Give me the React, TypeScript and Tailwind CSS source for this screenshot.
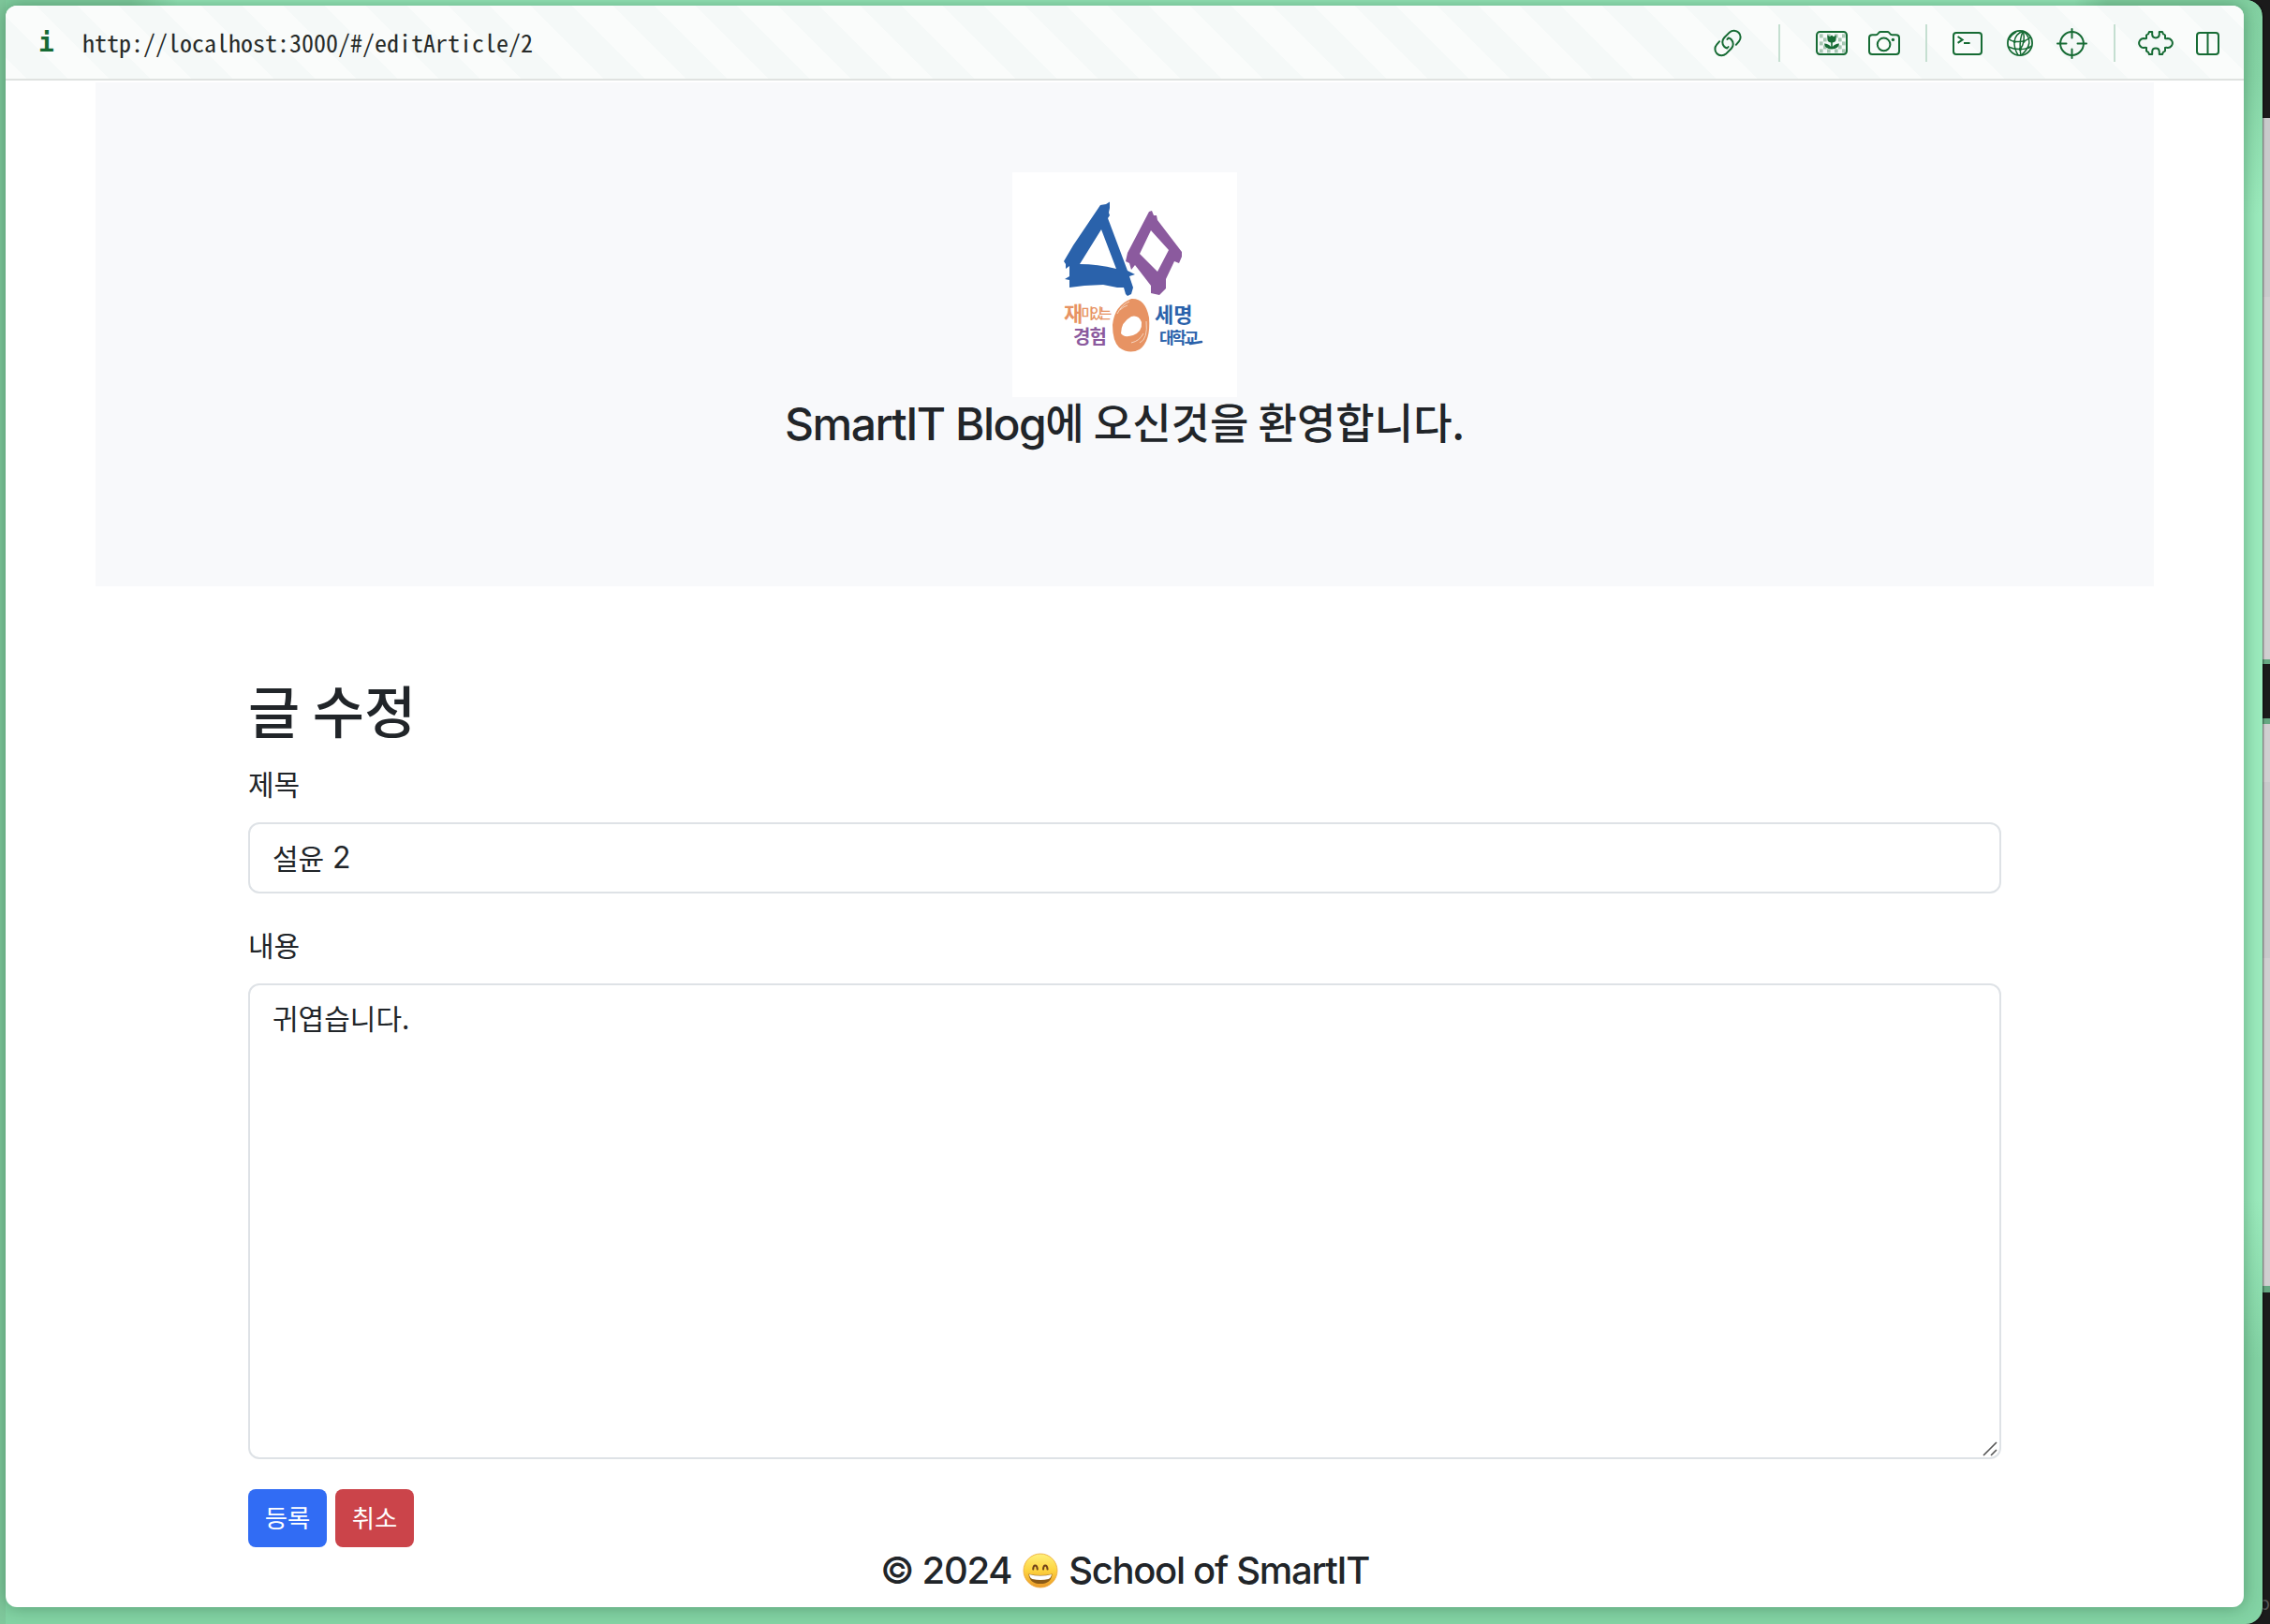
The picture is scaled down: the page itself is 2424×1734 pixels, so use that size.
import React from "react";

const INK = "#166b34";

function Ko({ children, className = "" }: { children: React.ReactNode; className?: string }) {
  return <span className={`font-['Noto_Sans_CJK_KR',sans-serif] ${className}`}>{children}</span>;
}

function Divider({ className = "" }: { className?: string }) {
  return <div className={`h-10 w-[2px] shrink-0 bg-[#c5dfd1] ${className}`} />;
}

function LinkIcon() {
  return (
    <svg className="ml-[30px]" width="30" height="30" viewBox="0 0 30 30" fill="none" stroke={INK} strokeWidth="2" strokeLinecap="round">
      <path d="M6.2 13.2 L3.2 16.6 A7 7 0 0 0 3.4 26.2 A7 7 0 0 0 13 26.6 L18.8 20.8 A7 7 0 0 0 18.8 11.2 Q17.6 10 15.8 9.6 Q15 10.2 14.4 11" />
      <path d="M23.8 16.8 L26.8 13.4 A7 7 0 0 0 26.6 3.8 A7 7 0 0 0 17 3.4 L11.2 9.2 A7 7 0 0 0 11.2 18.8 Q12.4 20 14.2 20.4 Q15 19.8 15.6 19" />
    </svg>
  );
}

function ImageIcon() {
  const cells: [number, number][] = [
    [4, 4], [12, 4], [20, 4], [8, 8], [24, 8], [4, 12], [28, 12], [8, 16], [24, 16], [4, 20], [12, 20], [20, 20], [28, 4], [28, 20],
  ];
  return (
    <svg className="ml-[38px]" width="34" height="26" viewBox="0 0 34 26" fill="none">
      {cells.map(([x, y]) => (
        <rect key={`${x}-${y}`} x={x} y={y - 0.6} width="3.6" height="4" fill={INK} opacity=".35" />
      ))}
      <rect x="1" y="1" width="32" height="24" rx="3.4" stroke={INK} strokeWidth="2" />
      <path d="M12.4 4.5 L15 6.3 L17 4.6 L19 6.3 L21.6 4.5 V9 Q21.6 12.4 17 12.4 Q12.4 12.4 12.4 9 Z" fill={INK} />
      <path d="M16.2 12 H17.8 V17 Q20.4 13.6 25 13.4 Q24.6 19 17 19.6 Q9.4 19 9 13.4 Q13.6 13.6 16.2 17 Z" fill={INK} />
    </svg>
  );
}

function CameraIcon() {
  return (
    <svg className="ml-[22px]" width="34" height="26" viewBox="0 0 34 26" fill="none" stroke={INK} strokeWidth="2">
      <path d="M4.4 4.2 H8.2 Q9.6 4.2 10.4 3 L11.2 2 Q12 1 13.2 1 H20.4 Q21.6 1 22.4 2 L23.2 3 Q24 4.2 25.4 4.2 H29.6 Q33 4.2 33 7.4 V21.8 Q33 25 29.6 25 H4.4 Q1 25 1 21.8 V7.4 Q1 4.2 4.4 4.2 Z" />
      <circle cx="16.6" cy="14.4" r="6.8" />
      <circle cx="26.4" cy="9.4" r="1.7" fill={INK} stroke="none" />
    </svg>
  );
}

function TerminalIcon() {
  return (
    <svg className="ml-[27px]" width="32" height="25" viewBox="0 0 32 25" fill="none" stroke={INK} strokeWidth="2">
      <rect x="1" y="1" width="30" height="23" rx="3" />
      <path d="M5.6 5 L10.6 8.4 L5.6 11.8" />
      <path d="M12 12 H18.6" />
    </svg>
  );
}

function GlobeIcon() {
  return (
    <svg className="ml-[26px]" width="28" height="28" viewBox="0 0 28 28" fill="none" stroke={INK} strokeWidth="1.5">
      <circle cx="14" cy="14" r="13.1" strokeWidth="1.8" />
      <path d="M17.4 1.2 Q9 4 8 12.4 Q7.6 20 12 26.8" />
      <path d="M17.4 1.2 Q13.6 9 14.2 20.6 Q14.4 24 15 27" />
      <path d="M17.4 1.2 Q18.8 7 18 12.2 Q17.2 17 14.2 20.6" />
      <path d="M17.4 1.2 Q24.6 7 23.8 14 Q22.6 21 15.2 27" />
      <path d="M2 9.4 Q5 12.6 13 12.6 Q21 12.4 25.4 7.6" />
      <path d="M1.6 18 Q7 20.6 14.2 20.6 Q22 20.6 26.4 17" />
      <path d="M10 2 Q5 5 2.6 9" />
      <circle cx="8.2" cy="12.4" r="1.5" fill={INK} stroke="none" />
      <circle cx="18" cy="12.2" r="1.5" fill={INK} stroke="none" />
      <circle cx="14.3" cy="20.5" r="1.7" fill={INK} stroke="none" />
      <circle cx="23.4" cy="18.8" r="1.2" fill={INK} stroke="none" />
    </svg>
  );
}

function TargetIcon() {
  return (
    <svg className="ml-[25px]" width="33" height="33" viewBox="0 0 33 33" fill="none" stroke={INK} strokeWidth="2" strokeLinecap="round">
      <circle cx="16.5" cy="16.5" r="12.4" />
      <path d="M16.5 1 V10.5 M16.5 22.5 V32 M1 16.5 H10.5 M22.5 16.5 H32" />
    </svg>
  );
}

function PuzzleIcon() {
  return (
    <svg className="ml-[24px]" width="38" height="26" viewBox="0 0 38 26" fill="none" stroke={INK} strokeWidth="2" strokeLinejoin="round">
      <path d="M9 8 V4.6 Q9.6 3.8 11 3.4 L12 1 H15.2 V4 Q15.4 7.4 19 7.4 Q22.6 7.4 22.8 4 V1 H26 L27 3.4 Q28.6 3.8 29 4.6 V8 Q30.2 8.6 31.6 8 Q34 7.8 35.8 10 Q38 13 35.8 16 Q34 18.2 31.6 18 Q30.2 17.4 29 18 V21.4 Q28.6 22.2 27 22.6 L26 25 H22.8 V22 Q22.6 18.6 19 18.6 Q15.4 18.6 15.2 22 V25 H12 L11 22.6 Q9.6 22.2 9 21.4 V18 Q7.8 17.4 6.4 18 Q4 18.2 2.2 16 Q0 13 2.2 10 Q4 7.8 6.4 8 Q7.8 8.6 9 8 Z" />
    </svg>
  );
}

function SplitIcon() {
  return (
    <svg className="ml-[24px]" width="25" height="25" viewBox="0 0 25 25" fill="none" stroke={INK} strokeWidth="2">
      <rect x="1" y="1" width="23" height="23" rx="3" />
      <path d="M12.5 1 V24" />
    </svg>
  );
}

function Toolbar() {
  return (
    <header className="flex h-20 shrink-0 items-center border-b-2 border-[#dfe2e0] bg-[repeating-linear-gradient(45deg,#fafcfb_0px,#fafcfb_15.6px,#f5f9f8_15.6px,#f5f9f8_46.7px,#fafcfb_46.7px,#fafcfb_62.23px)]">
      <span className="mt-[1px] ml-[35px] w-[18px] font-['DejaVu_Sans_Mono',monospace] text-[28px] leading-none font-bold text-[#166b34]">i</span>
      <span className="ml-[29px] font-['Noto_Sans_Mono_CJK_KR','Liberation_Mono',monospace] text-[26px] leading-none font-medium whitespace-nowrap text-[#262a28]">
        http://localhost:3000/#/editArticle/2
      </span>
      <div className="mr-[26px] ml-auto flex items-center pt-[2px]">
        <LinkIcon />
        <Divider className="ml-[39px]" />
        <ImageIcon />
        <CameraIcon />
        <Divider className="ml-[27px]" />
        <TerminalIcon />
        <GlobeIcon />
        <TargetIcon />
        <Divider className="ml-[28px]" />
        <PuzzleIcon />
        <SplitIcon />
      </div>
    </header>
  );
}

function Logo() {
  return (
    <svg className="block bg-white" width="240" height="240" viewBox="1 4 240 240">
      <path
        fill="#2a62ab"
        fillRule="evenodd"
        d="M95 39 L101 38 L105 35.5 L105 42 L104 47 L105 50 L103 53 L124 109 L132 113 L126 115 L130 127 L128 134 L124 136 L122 134 L120 127 L113 127 L98 124 L78 125 L62 127 L62 119 L57 118 L62 115 L62 104 L58 107 L58 102 L56 99 L66 82 Z M96 65 L73 102 Q92 102 112 107 Z"
      />
      <path
        fill="#8b5a9e"
        fillRule="evenodd"
        d="M147 46 L150 45 L152 50 L155 50 L156 55 L182 89 L182 94 L179 101 L174 99 L165 118 L165 128 L158 135 L149 133 L149 125 L132 103 L128 108 L126 101 L122 99 L124 90 Z M149 66 L137 91 L156 110 L168 87 Z"
      />
      <path
        fill="#e79363"
        fillRule="evenodd"
        d="M128 139 Q143 138 147 159 Q149 184 137 193 Q126 199 115 191 Q108 184 108 167 Q110 146 128 139 Z M128 158 Q117 164 117 176 Q120 181 130 178 Q140 174 139 164 Q136 156 128 158 Z"
      />
      <path d="M113 155 Q118 145 126 142 M116 151 Q120 147 124 146 M144 163 Q146 182 137 186 M141 176 Q137 184 128 186" stroke="#f6d3bd" strokeWidth="1" fill="none" />
      <g fontFamily="'Noto Sans CJK KR', sans-serif" fontWeight="500">
        <text x="56" y="163" fontSize="15" fill="#e79363">
          <tspan fontSize="22" fontWeight="700">재</tspan>
          <tspan dx="-2" dy="-3" letterSpacing="-4.2">미있는</tspan>
        </text>
        <text x="66" y="187" fontSize="20" fill="#8b5a9e" fontWeight="700" letterSpacing="-1">경험</text>
        <text x="153" y="164" fontSize="22" fill="#2a62ab" fontWeight="700" letterSpacing="0">세명</text>
        <text x="158" y="187" fontSize="17" fill="#2a62ab" fontWeight="700" letterSpacing="-2.4">대학교</text>
      </g>
      <path d="M191 187 L203 185" stroke="#2a62ab" strokeWidth="2.5" strokeLinecap="round" />
    </svg>
  );
}

function Hero() {
  return (
    <section className="mx-24 mt-[2px] flex h-[538px] shrink-0 flex-col items-center bg-[#f8f9fb] pt-24">
      <Logo />
      <h1 className="flex h-[58px] items-center font-medium whitespace-nowrap">
        <span className="text-[48px] tracking-[-1.5px]">SmartIT Blog</span>
        <Ko className="-mt-[6px] text-[45px]">에 오신것을 환영합니다.</Ko>
      </h1>
    </section>
  );
}

function Grin() {
  return (
    <svg width="38" height="38" viewBox="0 0 38 38">
      <defs>
        <linearGradient id="face" x1="0" y1="0" x2="0" y2="1">
          <stop offset="0" stopColor="#fff07a" />
          <stop offset=".5" stopColor="#fdd33f" />
          <stop offset="1" stopColor="#eb9a2b" />
        </linearGradient>
      </defs>
      <circle cx="19" cy="19" r="18" fill="url(#face)" stroke="#eba73a" strokeWidth=".8" />
      <path d="M11.2 17.6 Q11.4 13.4 13.4 13.4 Q15.4 13.4 15.8 17.6 M22 17.6 Q22.2 13.4 24.2 13.4 Q26.2 13.4 26.6 17.6" stroke="#71431a" strokeWidth="2" fill="none" strokeLinecap="round" />
      <path d="M6.4 22.4 Q19 25.4 31.6 22.4 Q30.6 33 19 33 Q7.4 33 6.4 22.4 Z" fill="#8a5a17" />
      <path d="M7 23 Q19 26 31 23 Q30.4 27 27.6 28 Q19 30 10.4 28 Q7.6 27 7 23 Z" fill="#fff" />
    </svg>
  );
}

function Form() {
  return (
    <main className="mx-[259px] mt-[92px] flex flex-col">
      <h2 className="h-[77px] leading-[77px] font-medium">
        <Ko className="text-[60px]">글 수정</Ko>
      </h2>
      <label className="mt-[17px] h-12 text-[30px] leading-[48px]">
        <Ko>제목</Ko>
      </label>
      <div className="mt-[18px] flex h-[76px] items-center rounded-xl border-2 border-[#dee2e6] px-6 text-[32px] leading-none whitespace-pre">
        <Ko className="mr-[2px] -mt-[3px] text-[30px]">설윤 </Ko>2
      </div>
      <label className="mt-[30px] h-12 text-[30px] leading-[48px]">
        <Ko>내용</Ko>
      </label>
      <div className="relative mt-[18px] h-[508px] rounded-xl border-2 border-[#dee2e6] px-6 py-[10px] text-[30px] leading-[48px]">
        <Ko>귀엽습니다.</Ko>
        <svg className="absolute right-[2px] bottom-[1px]" width="16" height="16" viewBox="0 0 16 16" stroke="#555" strokeWidth="1.6">
          <path d="M1 15 L15 1 M9 15 L15 9" />
        </svg>
      </div>
      <div className="mt-8 flex gap-[9px] text-[26.4px] leading-[60px] text-white">
        <button className="h-[62px] w-[84px] rounded-lg bg-[#316cf4] pb-[2px]">
          <Ko>등록</Ko>
        </button>
        <button className="h-[62px] w-[84px] rounded-lg bg-[#cb444a] pb-[2px]">
          <Ko>취소</Ko>
        </button>
      </div>
    </main>
  );
}

function DesktopStrip() {
  return (
    <div className="absolute inset-y-0 right-0 flex w-7 flex-col bg-[#1b1b1b] pt-[126px]">
      <div className="h-[191px] bg-[#c9cacb]" />
      <div className="h-[387px] bg-[#d0cfd0]" />
      <div className="h-[5px] bg-[#66a882]" />
      <div className="h-[58px] bg-[#1b1b1b]" />
      <div className="h-[6px] bg-[#66a882]" />
      <div className="h-[62px] bg-[#d0cfd0]" />
      <div className="h-[188px] bg-[#c8c9ca]" />
      <div className="h-[350px] bg-[#d0cfd0]" />
      <div className="h-[7px] bg-[#66a882]" />
      <span className="mt-auto mb-[8px] self-end text-[20px] leading-[28px] text-[#555]">p</span>
    </div>
  );
}

export default function App() {
  return (
    <div className="relative h-[1734px] w-[2424px] overflow-hidden bg-[#1b1b1b] font-['Inter',sans-serif] text-[#212529]">
      <DesktopStrip />
      <div className="relative h-[1734px] w-[2416px] overflow-hidden rounded-r-[18px] bg-[linear-gradient(180deg,#83d1a2_0px,#86d5a6_80px,#9bebbd_230px,#9bebbd_1280px,#83d3a4_1450px,#83d3a4_1734px)] pt-[6px] pl-[6px] shadow-[1px_0_2px_rgba(0,0,0,0.5)]">
        <div className="absolute top-0 left-0 h-3 w-full bg-[linear-gradient(90deg,#80cd9f_0px,#80cd9f_140px,#97e8ba_190px,#97e8ba_2215px,#83d1a2_2250px)]" />
        <div className="absolute top-0 left-0 h-full w-[6px] bg-[#7fc89c]" />
        <div className="relative flex h-[1710px] w-[2390px] flex-col overflow-hidden rounded-xl bg-white shadow-[0_0_18px_rgba(0,50,20,0.35)]">
          <Toolbar />
          <Hero />
          <Form />
          <footer className="flex h-[50px] items-center justify-center text-[40px] leading-none font-medium whitespace-nowrap">
            <span className="tracking-[-1.3px]">© 2024</span>
            <span className="mr-[11px] ml-[12px]">
              <Grin />
            </span>
            <span className="tracking-[-1.3px]">School of SmartIT</span>
          </footer>
        </div>
      </div>
    </div>
  );
}
